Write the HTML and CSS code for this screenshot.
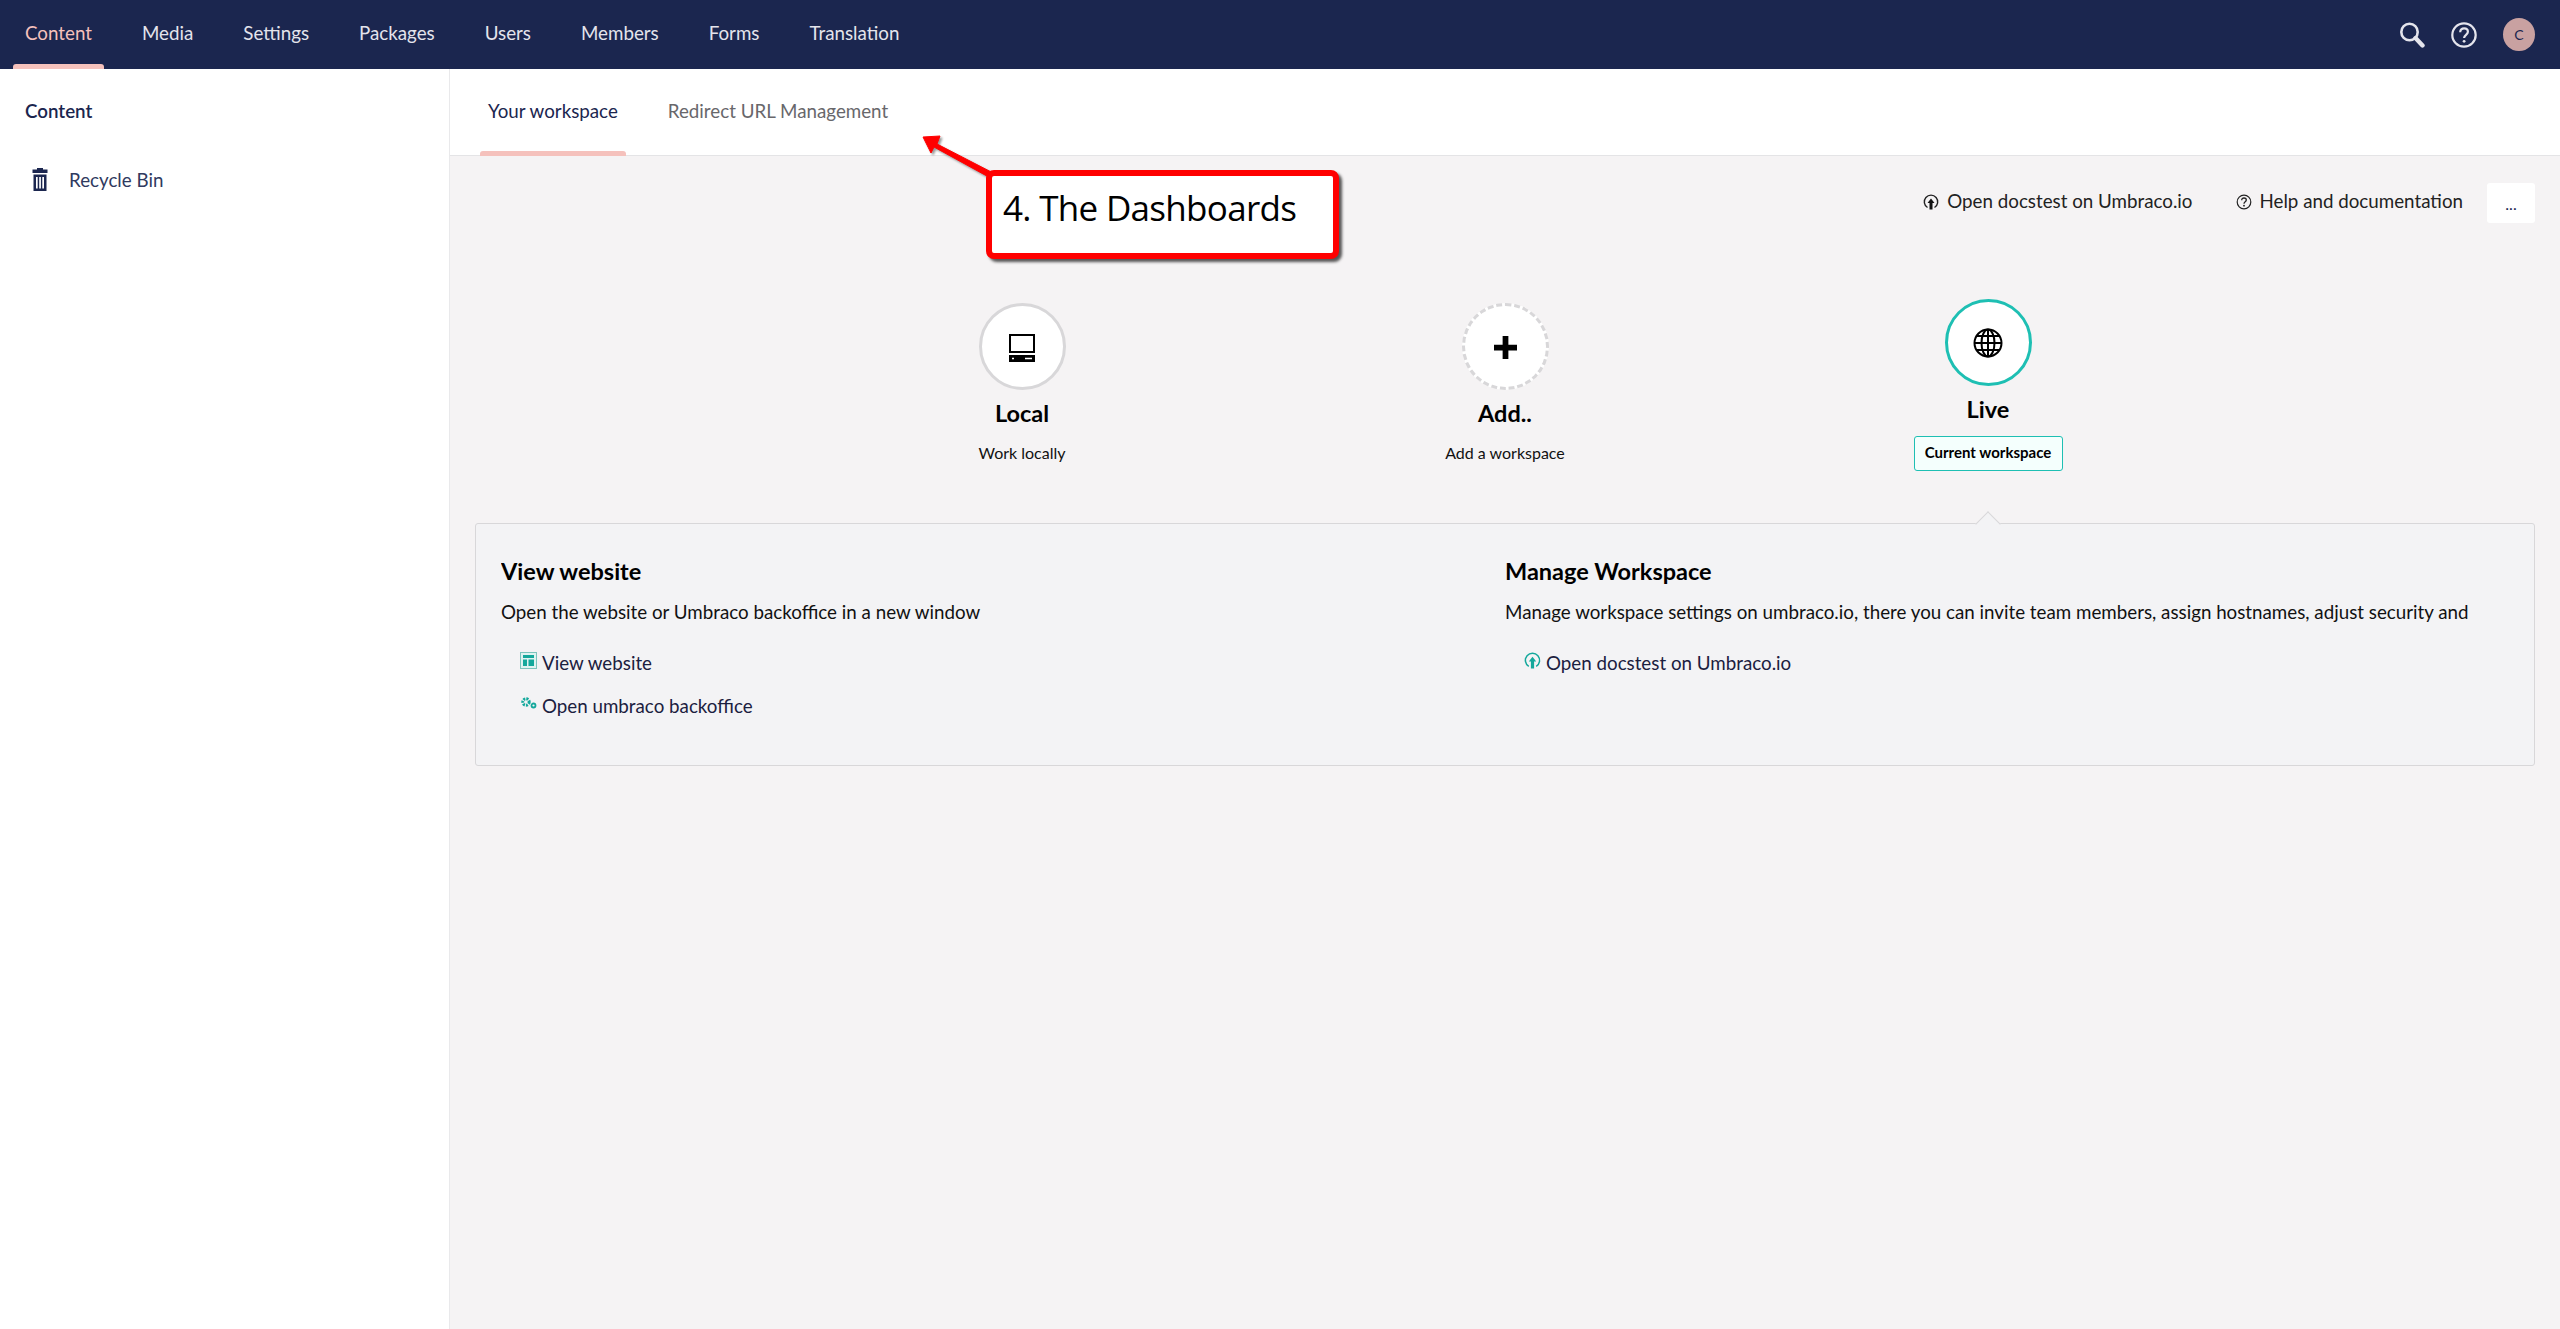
FILE: index.html
```html
<!DOCTYPE html>
<html lang="en">
<head>
    <meta charset="UTF-8">
    <title>Umbraco - Content</title>
    <link rel="stylesheet" href="styles.css">
</head>
<body>
    <header class="topbar">
        <nav class="topnav">
            <a class="topnav-item active">Content</a>
            <a class="topnav-item">Media</a>
            <a class="topnav-item">Settings</a>
            <a class="topnav-item">Packages</a>
            <a class="topnav-item">Users</a>
            <a class="topnav-item">Members</a>
            <a class="topnav-item">Forms</a>
            <a class="topnav-item">Translation</a>
        </nav>
        <div class="topbar-tools">
            <svg class="tool-icon" viewBox="0 0 26 26" fill="none" stroke="#e4e4ec">
                <circle cx="10.5" cy="10" r="8.2" stroke-width="2.6"/>
                <path d="M16.5 16l7 7.5" stroke-width="4.4" stroke-linecap="round"/>
            </svg>
            <svg class="tool-icon" viewBox="0 0 26 26" fill="none" stroke="#e4e4ec">
                <circle cx="13" cy="13" r="11.7" stroke-width="2.2"/>
                <path d="M9.2 10.2c0-2.4 1.7-3.8 3.9-3.800s3.800 1.300 3.800 3.400c0 3-3.800 3-3.800 6.200" stroke-width="2.2"/>
                <circle cx="13.1" cy="19.3" r="1.4" fill="#e4e4ec" stroke="none"/>
            </svg>
            <div class="avatar">C</div>
        </div>
    </header>

    <div class="app">
        <aside class="sidebar">
            <h3 class="sidebar-title">Content</h3>
            <div class="tree-item">
                <svg class="tree-icon" viewBox="0 0 16 24" fill="#1b264f">
                    <path d="M5 2.500V1h6v1.500h4.500V6H.5V2.500z"/>
                    <path fill-rule="evenodd" d="M1.500 7.500h13V24h-13zM4 10v11.500h1.700V10zM7.200 10v11.500h1.700V10zM10.300 10v11.500H12V10z"/>
                </svg>
                <span>Recycle Bin</span>
            </div>
        </aside>

        <main class="main">
            <div class="tabs">
                <a class="tab active">Your workspace</a>
                <a class="tab">Redirect URL Management</a>
            </div>

            <section class="dashboard">
                <div class="quicklinks">
                    <a class="quicklink">
                        <svg class="ql-icon" viewBox="0 0 16 16" fill="none" stroke="#222">
                            <path d="M4.500 13.500a6.700 6.700 0 1 1 7 0" stroke-width="1.400"/>
                            <path d="M8 4.500l3.500 4.500H9.500v6.500h-3V9h-2z" fill="#111" stroke="none"/>
                        </svg>
                        Open docstest on Umbraco.io
                    </a>
                    <a class="quicklink">
                        <svg class="ql-icon" viewBox="0 0 16 16" fill="none" stroke="#222">
                            <circle cx="8" cy="8" r="6.800" stroke-width="1.200"/>
                            <path d="M5.700 6.200c0-1.400 1-2.200 2.300-2.200s2.300.8 2.300 2c0 1.800-2.300 1.800-2.300 3.800" stroke-width="1.300"/>
                            <circle cx="8" cy="11.700" r=".9" fill="#222" stroke="none"/>
                        </svg>
                        Help and documentation
                    </a>
                    <button class="more-btn">...</button>
                </div>

                <div class="workspaces">
                    <div class="workspace">
                        <div class="ws-circle">
                            <svg class="ws-icon" viewBox="0 0 26 28" fill="none" stroke="#000">
                                <rect x="1" y="1" width="24" height="17" stroke-width="2"/>
                                <path d="M0 21h26v7H0z" fill="#000" stroke="none"/>
                                <path d="M16 24.500h7M3 24.500h2" stroke="#fff" stroke-width="1.600"/>
                            </svg>
                        </div>
                        <div class="ws-name">Local</div>
                        <div class="ws-sub">Work locally</div>
                    </div>
                    <div class="workspace">
                        <div class="ws-circle dashed">
                            <svg class="ws-plus" viewBox="0 0 24 24" fill="#000">
                                <path d="M9 0h6v9h9v6h-9v9H9v-9H0V9h9z"/>
                            </svg>
                        </div>
                        <div class="ws-name">Add..</div>
                        <div class="ws-sub">Add a workspace</div>
                    </div>
                    <div class="workspace current">
                        <div class="ws-circle">
                            <svg class="ws-globe" viewBox="0 0 30 30" fill="none" stroke="#000" stroke-width="2">
                                <circle cx="15" cy="15" r="13.500"/>
                                <ellipse cx="15" cy="15" rx="6.500" ry="13.500"/>
                                <path d="M15 1.500v27M1.500 15h27M3.500 8h23M3.500 22h23"/>
                            </svg>
                        </div>
                        <div class="ws-name">Live</div>
                        <div class="ws-badge">Current workspace</div>
                    </div>
                </div>

                <div class="panel">
                    <div class="panel-col">
                        <h4 class="panel-title">View website</h4>
                        <p class="panel-desc">Open the website or Umbraco backoffice in a new window</p>
                        <a class="panel-link">
                            <svg class="link-icon" viewBox="0 0 17 17">
                                <rect x=".5" y=".5" width="16" height="16" fill="#dff3f1" stroke="#7cc4bd"/>
                                <path d="M3 3h11v3H3zM3 7.500h4V14H3zM8.500 7.500H14V14H8.500z" fill="#14a89c"/>
                            </svg>
                            View website
                        </a>
                        <a class="panel-link">
                            <svg class="link-icon" viewBox="0 0 17 17" fill="none" stroke="#14a89c">
                                <circle cx="6" cy="7" r="3.200" stroke-width="3" stroke-dasharray="2 1"/>
                                <circle cx="13.500" cy="10.500" r="2" stroke-width="1.800"/>
                            </svg>
                            Open umbraco backoffice
                        </a>
                    </div>
                    <div class="panel-col">
                        <h4 class="panel-title">Manage Workspace</h4>
                        <p class="panel-desc">Manage workspace settings on umbraco.io, there you can invite team members, assign hostnames, adjust security and</p>
                        <a class="panel-link">
                            <svg class="link-icon" viewBox="0 0 16 16" fill="none" stroke="#14a89c">
                                <path d="M4.500 13.500a6.700 6.700 0 1 1 7 0" stroke-width="1.400"/>
                                <path d="M8 4.500l3.500 4.500H9.500v6.500h-3V9h-2z" fill="#14a89c" stroke="none"/>
                            </svg>
                            Open docstest on Umbraco.io
                        </a>
                    </div>
                </div>
            </section>

            <div class="callout">
                <svg class="callout-arrow" viewBox="0 0 80 50">
                    <path d="M78 44L16 12l3-8L2 5l8 16 3-6 62 34z" fill="#f00" stroke="#f00" stroke-width="1" stroke-linejoin="round"/>
                </svg>
                <div class="callout-box">4. The Dashboards</div>
            </div>
        </main>
    </div>
</body>
</html>
```

FILE: styles.css
```css
* {
    box-sizing: border-box;
}
html, body {
    height: 100%;
}
body {
    margin: 0;
    font-family: Lato, 'Liberation Sans', sans-serif;
    font-size: 18.75px;
    color: #1b264f;
    background: #fff;
    display: flex;
    flex-direction: column;
    overflow: hidden;
}

/* top bar */
.topbar {
    height: 69px;
    flex: none;
    background: #1b264f;
    display: flex;
    justify-content: space-between;
    align-items: stretch;
}
.topnav {
    display: flex;
}
.topnav-item {
    position: relative;
    padding: 0 25px;
    line-height: 66px;
    color: #e4e4ec;
}
.topnav-item.active {
    color: #f5c1bc;
}
.topnav-item.active::after {
    content: "";
    position: absolute;
    left: 13px;
    right: 13px;
    bottom: 0;
    height: 5px;
    background: #f5c1bc;
    border-radius: 3px 3px 0 0;
}
.topbar-tools {
    display: flex;
    align-items: center;
    padding-right: 25px;
}
.tool-icon {
    width: 26px;
    height: 26px;
    margin-right: 26px;
}
.avatar {
    width: 32px;
    height: 33px;
    border-radius: 50%;
    background: #c9a1a1;
    color: #1b264f;
    font-size: 14px;
    text-align: center;
    line-height: 33px;
}

.app {
    flex: 1;
    display: flex;
    min-height: 0;
}

/* left tree */
.sidebar {
    width: 450px;
    flex: none;
    border-right: 1px solid #e9e9eb;
    padding: 31px 25px 0;
}
.sidebar-title {
    margin: 0;
    font-size: 18.75px;
    font-weight: 600;
    line-height: 22px;
}
.tree-item {
    display: flex;
    align-items: center;
    margin-top: 45px;
    padding-left: 7px;
    color: #303a60;
}
.tree-icon {
    width: 16px;
    height: 24px;
    margin-right: 21px;
}

/* main */
.main {
    position: relative;
    flex: 1;
    min-width: 0;
    display: flex;
    flex-direction: column;
    background: #f5f3f4;
}
.tabs {
    height: 87px;
    flex: none;
    background: #fff;
    border-bottom: 1px solid #e4e4e6;
    display: flex;
    padding-left: 30px;
}
.tab {
    position: relative;
    padding: 31px 8px 0;
    margin-right: 34px;
    line-height: 22px;
    color: #68676b;
}
.tab.active {
    color: #1b264f;
}
.tab.active::after {
    content: "";
    position: absolute;
    left: 0;
    right: 0;
    bottom: -1px;
    height: 5px;
    background: #f5c1bc;
    border-radius: 3px 3px 0 0;
}

.dashboard {
    flex: 1;
    padding: 27px 25px 0;
    color: #222;
}
.quicklinks {
    display: flex;
    justify-content: flex-end;
    align-items: center;
    height: 40px;
}
.quicklink {
    display: flex;
    align-items: center;
    margin: 0 43px 5px 0;
}
.quicklink:nth-child(2) {
    margin-right: 24px;
}
.ql-icon {
    width: 16px;
    height: 16px;
    margin: 3px 8px 0 0;
}
.more-btn {
    width: 48px;
    height: 40px;
    border: none;
    border-radius: 3px;
    background: #fff;
    color: #1b264f;
    font: 16px Lato, sans-serif;
}

/* workspaces */
.workspaces {
    display: grid;
    grid-template-columns: repeat(3, 483px);
    justify-content: center;
    margin-top: 80px;
    height: 220px;
    color: #000;
}
.workspace {
    display: flex;
    flex-direction: column;
    align-items: center;
}
.workspace.current {
    margin-top: -4px;
}
.ws-circle {
    width: 87px;
    height: 87px;
    border-radius: 50%;
    background: #fff;
    border: 3px solid #d8d7d9;
    display: flex;
    align-items: center;
    justify-content: center;
}
.ws-circle.dashed {
    border-style: dashed;
}
.current .ws-circle {
    border-color: #1ebfb3;
}
.ws-icon {
    width: 26px;
    height: 28px;
    margin-top: 2px;
}
.ws-plus {
    width: 23px;
    height: 23px;
    margin-top: 1px;
}
.ws-globe {
    width: 30px;
    height: 30px;
}
.ws-name {
    margin-top: 9px;
    font-size: 23.5px;
    font-weight: 700;
    line-height: 28px;
}
.ws-sub {
    margin-top: 16px;
    font-size: 16px;
    line-height: 20px;
    color: #111;
}
.ws-badge {
    margin-top: 13px;
    width: 149px;
    height: 35px;
    border: 1.5px solid #1ebfb3;
    border-radius: 3px;
    background: #f4fffd;
    font-size: 15px;
    font-weight: 700;
    text-align: center;
    line-height: 31px;
}

/* panel under the workspaces */
.panel {
    position: relative;
    height: 243px;
    border: 1.5px solid #d8d7d9;
    border-radius: 3px;
    background: #f3f3f5;
    display: grid;
    grid-template-columns: 1004px 1fr;
    padding: 33px 0 0 25px;
    color: #111;
}
.panel::before {
    content: "";
    position: absolute;
    left: 1503px;
    top: -9px;
    width: 17px;
    height: 17px;
    background: #f3f3f5;
    border-top: 1.5px solid #d8d7d9;
    border-left: 1.5px solid #d8d7d9;
    transform: rotate(45deg);
}
.panel-col {
    min-width: 0;
    overflow: hidden;
    white-space: nowrap;
}
.panel-title {
    margin: 0;
    font-size: 23.5px;
    font-weight: 700;
    line-height: 28px;
    color: #000;
}
.panel-desc {
    margin: 13px 0 16px;
    line-height: 27px;
}
.panel-link {
    display: flex;
    align-items: center;
    height: 43px;
    padding-left: 19px;
    color: #1b2040;
}
.link-icon {
    width: 17px;
    height: 17px;
    margin: -4px 5px 0 0;
}

/* screenshot annotation on top of the page */
.callout {
    position: absolute;
    left: 471px;
    top: 63px;
    width: 420px;
    height: 130px;
}
.callout-arrow {
    position: absolute;
    left: 0;
    top: 0;
    width: 80px;
    height: 50px;
    filter: drop-shadow(2px 2px 1px rgba(0, 0, 0, .4));
}
.callout-box {
    position: absolute;
    left: 65px;
    top: 38px;
    width: 353px;
    height: 89px;
    background: #fff;
    border: 6px solid #f00;
    border-radius: 8px;
    box-shadow: 3px 3px 3px rgba(0, 0, 0, .65);
    padding: 0 0 0 11px;
    font-family: 'Open Sans', sans-serif;
    font-size: 35px;
    letter-spacing: -.7px;
    line-height: 64px;
    color: #000;
}
```
